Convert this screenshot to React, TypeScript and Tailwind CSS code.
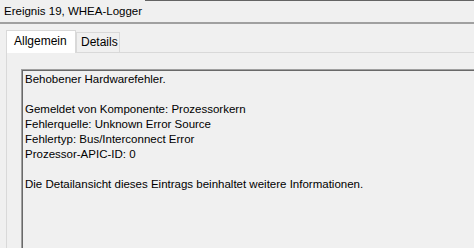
import React from "react";

export default function App() {
  const lines = [
    "Behobener Hardwarefehler.",
    "",
    "Gemeldet von Komponente: Prozessorkern",
    "Fehlerquelle: Unknown Error Source",
    "Fehlertyp: Bus/Interconnect Error",
    "Prozessor-APIC-ID: 0",
    "",
    "Die Detailansicht dieses Eintrags beinhaltet weitere Informationen.",
  ];
  return (
    <div className="w-[474px] h-[248px] bg-[#f0f0f0] overflow-hidden text-black font-['Liberation_Sans',Arial,sans-serif]">
      <div className="flex h-[22px]">
        <div className="pl-[4px] pr-[3px] text-[11.5px] leading-[22px] whitespace-nowrap">
          Ereignis 19, WHEA-Logger
        </div>
        <div className="flex-1 border-t border-[#646464]" />
      </div>
      <div className="h-[2px] bg-[#a0a0a0]" />
      <div className="pl-[6px] pt-[6px]">
        <div className="flex items-end h-[22px]">
          <div className="relative z-10 -mb-px h-[23px] w-[70px] bg-white border-t border-l border-r border-[#d9d9d9] pl-[7px] text-[12px] leading-[21px] whitespace-nowrap">
            Allgemein
          </div>
          <div className="h-[20px] w-[44px] bg-[#f0f0f0] border-t border-l border-r border-[#d9d9d9] pl-[4px] text-[12px] leading-[18px] whitespace-nowrap">
            Details
          </div>
        </div>
        <div className="h-[200px] border-t border-l border-[#d9d9d9] pl-[14px] pt-[16px]">
          <div className="h-full border-t border-l border-[#a0a0a0]">
            <div className="h-full border-t border-l border-[#696969] pl-[2px] pt-[1px] text-[11.5px] leading-[15px]">
              {lines.map((l, i) => (
                <div key={i} className="h-[15px] whitespace-nowrap">
                  {l}
                </div>
              ))}
            </div>
          </div>
        </div>
      </div>
    </div>
  );
}
